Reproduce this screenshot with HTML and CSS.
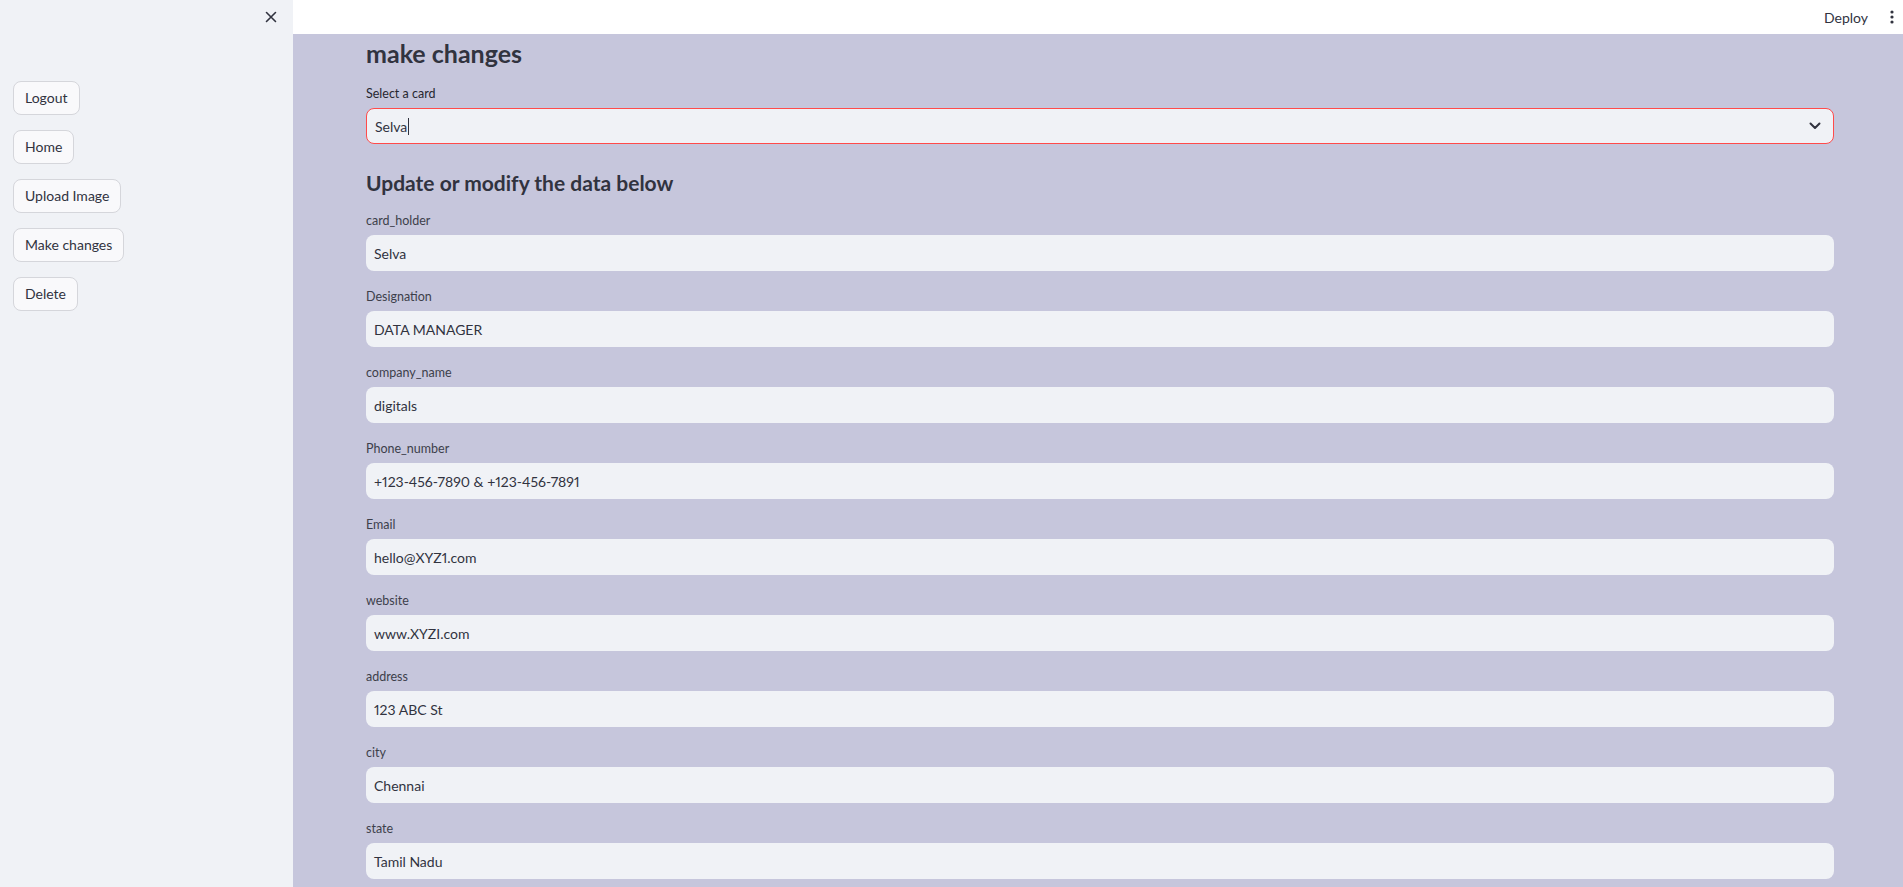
FILE: index.html
```html
<!DOCTYPE html>
<html lang="en">
<head>
<meta charset="utf-8">
<title>make changes</title>
<link rel="stylesheet" href="styles.css">
</head>
<body>
<div class="app">
  <aside class="sidebar">
    <div class="sidebar-top">
      <button class="close-btn" aria-label="Close sidebar">
        <svg width="12" height="12" viewBox="0 0 12 12"><path d="M1.5 1.5 L10.5 10.5 M10.5 1.5 L1.5 10.5" stroke="#31333f" stroke-width="1.6" stroke-linecap="round"/></svg>
      </button>
    </div>
    <nav class="side-nav">
      <button class="side-btn">Logout</button>
      <button class="side-btn">Home</button>
      <button class="side-btn">Upload Image</button>
      <button class="side-btn">Make changes</button>
      <button class="side-btn">Delete</button>
    </nav>
  </aside>
  <div class="main-wrap">
    <header class="topbar">
      <span class="deploy">Deploy</span>
      <span class="kebab">
        <svg width="4" height="14" viewBox="0 0 4 14"><circle cx="2" cy="2" r="1.6" fill="#31333f"/><circle cx="2" cy="7" r="1.6" fill="#31333f"/><circle cx="2" cy="12" r="1.6" fill="#31333f"/></svg>
      </span>
    </header>
    <main class="main">
      <div class="content">
        <h3 class="title">make changes</h3>
        <div class="field">
          <label class="label label-strong">Select a card</label>
          <div class="select">
            <span class="select-value">Selva<span class="caret"></span></span>
            <svg class="chevron" width="12" height="8" viewBox="0 0 12 8"><path d="M1.5 1.5 L6 6 L10.5 1.5" fill="none" stroke="#31333f" stroke-width="2" stroke-linecap="round" stroke-linejoin="round"/></svg>
          </div>
        </div>
        <h4 class="subtitle">Update or modify the data below</h4>
        <div class="field"><label class="label">card_holder</label><div class="input">Selva</div></div>
        <div class="field"><label class="label">Designation</label><div class="input">DATA MANAGER</div></div>
        <div class="field"><label class="label">company_name</label><div class="input">digitals</div></div>
        <div class="field"><label class="label">Phone_number</label><div class="input">+123-456-7890 &amp; +123-456-7891</div></div>
        <div class="field"><label class="label">Email</label><div class="input">hello@XYZ1.com</div></div>
        <div class="field"><label class="label">website</label><div class="input">www.XYZI.com</div></div>
        <div class="field"><label class="label">address</label><div class="input">123 ABC St</div></div>
        <div class="field"><label class="label">city</label><div class="input">Chennai</div></div>
        <div class="field"><label class="label">state</label><div class="input">Tamil Nadu</div></div>
      </div>
    </main>
  </div>
</div>
</body>
</html>
```

FILE: styles.css
```css
* { box-sizing: border-box; }
html, body { margin: 0; padding: 0; height: 100%; overflow: hidden; }
body {
  font-family: Lato, "Source Sans Pro", "Noto Sans", sans-serif;
  color: #31333f;
  background: #c6c6dc;
  font-variant-numeric: proportional-nums;
}
.app { display: flex; height: 887px; }
.sidebar {
  width: 293px;
  flex: none;
  background: #f0f2f6;
  display: flex;
  flex-direction: column;
}
.sidebar-top {
  height: 34px;
  flex: none;
  display: flex;
  justify-content: flex-end;
  align-items: center;
  padding-right: 14px;
}
.close-btn {
  border: none;
  background: transparent;
  padding: 0;
  width: 16px;
  height: 16px;
  display: flex;
  align-items: center;
  justify-content: center;
}
.side-nav {
  padding: 47px 0 0 13px;
  display: flex;
  flex-direction: column;
  align-items: flex-start;
  gap: 15px;
}
.side-btn {
  height: 34px;
  padding: 0 11px;
  border: 1px solid #d5d6db;
  border-radius: 8px;
  background: #f9f9fb;
  font-family: inherit;
  font-size: 14px;
  color: #31333f;
  line-height: 32px;
}
.main-wrap { flex: 1; display: flex; flex-direction: column; min-width: 0; min-height: 0; }
.topbar {
  flex: none;
  height: 34px;
  background: #ffffff;
  display: flex;
  align-items: center;
  justify-content: flex-end;
  padding-right: 9px;
  gap: 22px;
}
.deploy { font-size: 14px; color: #31333f; }
.kebab { display: flex; align-items: center; }
.main { flex: 1; min-height: 0; overflow: hidden; padding: 0 69px 0 73px; }
.content { display: flex; flex-direction: column; }
.title {
  margin: 0;
  height: 51px;
  font-size: 25px;
  font-weight: 700;
  line-height: 38px;
}
.subtitle {
  margin: 0;
  height: 51px;
  padding-top: 9px;
  font-size: 21px;
  font-weight: 700;
  line-height: 26px;
}
.field { display: flex; flex-direction: column; margin-bottom: 17px; }
.label {
  height: 18px;
  line-height: 18px;
  font-size: 12.5px;
  margin-bottom: 5px;
  color: #3d3f4b;
}
.label-strong { color: #262730; }
.select {
  height: 36px;
  border: 1px solid #ff4b4b;
  border-radius: 8px;
  background: #f0f2f6;
  display: flex;
  align-items: center;
  justify-content: space-between;
  padding: 0 12px 0 8px;
  font-size: 14px;
}
.select-value { display: flex; align-items: center; }
.caret { display: inline-block; width: 1px; height: 17px; background: #31333f; margin-left: 1px; }
.input {
  height: 36px;
  border-radius: 8px;
  background: #f0f2f6;
  display: flex;
  align-items: center;
  padding: 0 8px;
  font-size: 14px;
}
```
